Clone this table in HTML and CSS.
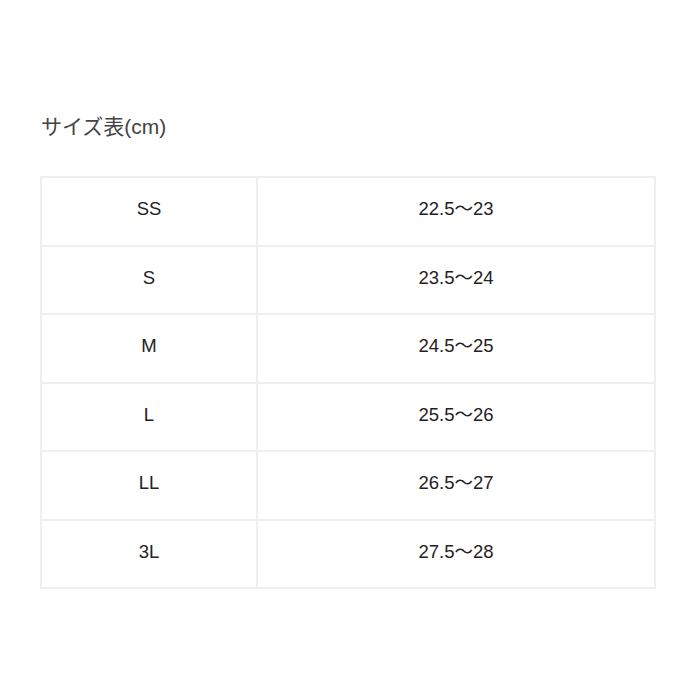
FILE: index.html
```html
<!DOCTYPE html>
<html lang="ja">
<head>
<meta charset="utf-8">
<link rel="stylesheet" href="styles.css">
</head>
<body>
<div class="wrap">
  <h2 class="title">サイズ表(cm)</h2>
  <table class="size-table">
    <tr><td class="c1">SS</td><td class="c2">22.5～23</td></tr>
    <tr><td class="c1">S</td><td class="c2">23.5～24</td></tr>
    <tr><td class="c1">M</td><td class="c2">24.5～25</td></tr>
    <tr><td class="c1">L</td><td class="c2">25.5～26</td></tr>
    <tr><td class="c1">LL</td><td class="c2">26.5～27</td></tr>
    <tr><td class="c1">3L</td><td class="c2">27.5～28</td></tr>
  </table>
</div>
</body>
</html>
```
FILE: styles.css
```css
html, body { margin: 0; padding: 0; background: #fff; }
body {
  font-family: "Liberation Sans", Arial, "Noto Sans CJK JP", sans-serif;
  color: #222;
}
.wrap { padding: 113px 44px 0 40px; }
.title {
  margin: 0 0 35px 1px;
  font-size: 21px;
  font-weight: normal;
  color: #444;
  line-height: 28px;
}
.size-table {
  width: 616px;
  border-collapse: collapse;
  border: 2px solid #f0f0f0;
}
.size-table td {
  border: 2px solid #efefef;
  height: 62.5px;
  padding: 0 0 4px 0;
  text-align: center;
  font-size: 18.5px;
  line-height: 20px;
  color: #222;
}
.size-table .c1 { width: 214px; }
```
